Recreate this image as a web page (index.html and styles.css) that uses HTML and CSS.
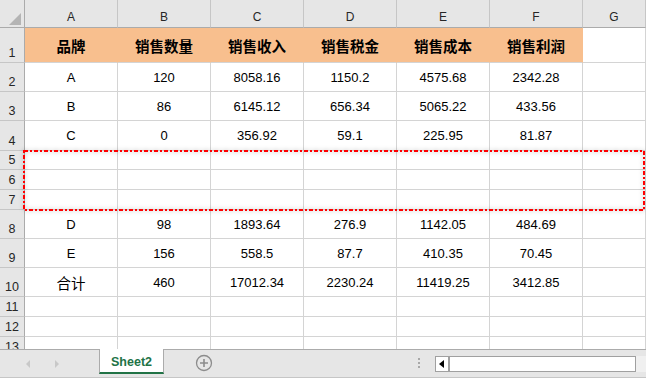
FILE: index.html
```html
<!DOCTYPE html>
<html lang="zh">
<head>
<meta charset="utf-8">
<title>Sheet2</title>
<link rel="stylesheet" href="styles.css">
</head>
<body>
<div class="app">
  <div class="sheet">
    <div class="grid">
      <div class="corner"><span class="tri"></span></div>
      <div class="ch">A</div><div class="ch">B</div><div class="ch">C</div><div class="ch">D</div><div class="ch">E</div><div class="ch">F</div><div class="ch">G</div>

      <div class="rh">1</div>
      <div class="c hd">品牌</div><div class="c hd">销售数量</div><div class="c hd">销售收入</div><div class="c hd">销售税金</div><div class="c hd">销售成本</div><div class="c hd">销售利润</div><div class="c"></div>

      <div class="rh">2</div>
      <div class="c">A</div><div class="c">120</div><div class="c">8058.16</div><div class="c">1150.2</div><div class="c">4575.68</div><div class="c">2342.28</div><div class="c"></div>

      <div class="rh">3</div>
      <div class="c">B</div><div class="c">86</div><div class="c">6145.12</div><div class="c">656.34</div><div class="c">5065.22</div><div class="c">433.56</div><div class="c"></div>

      <div class="rh">4</div>
      <div class="c">C</div><div class="c">0</div><div class="c">356.92</div><div class="c">59.1</div><div class="c">225.95</div><div class="c">81.87</div><div class="c"></div>

      <div class="rh">5</div>
      <div class="c"></div><div class="c"></div><div class="c"></div><div class="c"></div><div class="c"></div><div class="c"></div><div class="c"></div>

      <div class="rh">6</div>
      <div class="c"></div><div class="c"></div><div class="c"></div><div class="c"></div><div class="c"></div><div class="c"></div><div class="c"></div>

      <div class="rh">7</div>
      <div class="c"></div><div class="c"></div><div class="c"></div><div class="c"></div><div class="c"></div><div class="c"></div><div class="c"></div>

      <div class="rh">8</div>
      <div class="c">D</div><div class="c">98</div><div class="c">1893.64</div><div class="c">276.9</div><div class="c">1142.05</div><div class="c">484.69</div><div class="c"></div>

      <div class="rh">9</div>
      <div class="c">E</div><div class="c">156</div><div class="c">558.5</div><div class="c">87.7</div><div class="c">410.35</div><div class="c">70.45</div><div class="c"></div>

      <div class="rh">10</div>
      <div class="c cjk">合计</div><div class="c">460</div><div class="c">17012.34</div><div class="c">2230.24</div><div class="c">11419.25</div><div class="c">3412.85</div><div class="c"></div>

      <div class="rh">11</div>
      <div class="c"></div><div class="c"></div><div class="c"></div><div class="c"></div><div class="c"></div><div class="c"></div><div class="c"></div>

      <div class="rh">12</div>
      <div class="c"></div><div class="c"></div><div class="c"></div><div class="c"></div><div class="c"></div><div class="c"></div><div class="c"></div>

      <div class="rh">13</div>
      <div class="c"></div><div class="c"></div><div class="c"></div><div class="c"></div><div class="c"></div><div class="c"></div><div class="c"></div>
    </div>
    <svg class="marquee" width="623" height="62" viewBox="0 0 623 62">
      <rect x="1" y="1" width="620" height="59" fill="none" stroke="#ff0000" stroke-width="2" stroke-dasharray="4 2 2 2"/>
    </svg>
  </div>

  <div class="tabbar">
    <div class="nav">
      <svg width="8" height="10" viewBox="0 0 8 10"><path d="M6 1 L2 5 L6 9 Z" fill="#c8c8c8"/></svg>
      <svg width="8" height="10" viewBox="0 0 8 10"><path d="M2 1 L6 5 L2 9 Z" fill="#c8c8c8"/></svg>
    </div>
    <div class="tab">Sheet2</div>
    <svg class="plus" width="18" height="18" viewBox="0 0 18 18">
      <circle cx="9" cy="9" r="7.5" fill="none" stroke="#8c8c8c" stroke-width="1.3"/>
      <path d="M9 5 V13 M5 9 H13" stroke="#8c8c8c" stroke-width="1.6"/>
    </svg>
    <div class="spacer"></div>
    <div class="dots"><i></i><i></i><i></i></div>
    <div class="track">
      <div class="btn"><svg width="6" height="8" viewBox="0 0 6 8"><path d="M5 0 L0 4 L5 8 Z" fill="#000"/></svg></div>
    </div>
    <div class="tail"></div>
  </div>
</div>
</body>
</html>
```

FILE: styles.css
```css
html, body {
  margin: 0;
  padding: 0;
  background: #ffffff;
}

.app {
  width: 646px;
  height: 378px;
  overflow: hidden;
  font-family: "Liberation Sans", "Noto Sans CJK SC", sans-serif;
  color: #000;
}

.sheet {
  position: relative;
  height: 349px;
  overflow: hidden;
}

.grid {
  display: grid;
  grid-template-columns: 25px repeat(6, 93px) 1fr;
  grid-template-rows: 28px 35px 29px 29px 30px 19px 20px 20px 29px 29px 29px 20px 20px 20px;
}

.grid > div {
  box-sizing: border-box;
}

.corner {
  position: relative;
  background: #e6e6e6;
  border-right: 1px solid #ababab;
  border-bottom: 1px solid #ababab;
}

.tri {
  position: absolute;
  left: 9px;
  top: 13px;
  width: 0;
  height: 0;
  border-left: 12px solid transparent;
  border-bottom: 12px solid #b4b4b4;
}

.ch {
  background: #e6e6e6;
  border-right: 1px solid #c6c6c6;
  border-bottom: 1px solid #ababab;
  display: flex;
  align-items: flex-end;
  justify-content: center;
  padding-bottom: 3px;
  font-size: 12px;
  color: #262626;
}

.rh {
  background: #e6e6e6;
  border-right: 1px solid #ababab;
  border-bottom: 1px solid #c6c6c6;
  display: flex;
  align-items: flex-end;
  justify-content: center;
  padding-bottom: 2px;
  font-size: 12.5px;
  color: #262626;
}

.c {
  border-right: 1px solid #d4d4d4;
  border-bottom: 1px solid #d4d4d4;
  display: flex;
  align-items: center;
  justify-content: center;
  font-size: 13px;
  white-space: nowrap;
}

.c.hd {
  background: #f8bf8e;
  border-right-color: #f8bf8e;
  font-size: 14.5px;
  font-weight: bold;
}

.c.cjk {
  font-size: 14.5px;
}

.marquee {
  position: absolute;
  left: 23px;
  top: 150px;
  filter: drop-shadow(0 0 2px rgba(0, 0, 0, 0.3));
}

.tabbar {
  height: 29px;
  box-sizing: border-box;
  background: #e6e6e6;
  border-top: 1px solid #ababab;
  border-bottom: 1px solid #c6c6c6;
  display: flex;
  align-items: flex-start;
}

.nav {
  width: 99px;
  height: 27px;
  display: flex;
  align-items: center;
  gap: 21px;
  padding-left: 24px;
  box-sizing: border-box;
}

.tab {
  width: 65px;
  height: 25px;
  margin-top: -1px;
  box-sizing: border-box;
  background: #ffffff;
  border-left: 1px solid #ababab;
  border-right: 1px solid #ababab;
  border-bottom: 2px solid #217346;
  display: flex;
  align-items: center;
  justify-content: center;
  padding-top: 2px;
  font-size: 12.5px;
  font-weight: bold;
  color: #217346;
}

.plus {
  margin-left: 31px;
  margin-top: 4px;
}

.spacer {
  flex: 1;
}

.dots {
  width: 2px;
  margin-top: 8px;
  margin-right: 15px;
  display: flex;
  flex-direction: column;
  gap: 2px;
}

.dots i {
  width: 2px;
  height: 2px;
  background: #a8a8a8;
}

.track {
  width: 201px;
  height: 16px;
  margin-top: 6px;
  box-sizing: border-box;
  background: #ffffff;
  border: 1px solid #a0a0a0;
  display: flex;
}

.btn {
  width: 14px;
  height: 14px;
  box-sizing: border-box;
  border-right: 2px solid #a0a0a0;
  display: flex;
  align-items: center;
  justify-content: center;
}

.tail {
  width: 10px;
  height: 16px;
  margin-top: 6px;
  background: #f0f0f0;
}
```
